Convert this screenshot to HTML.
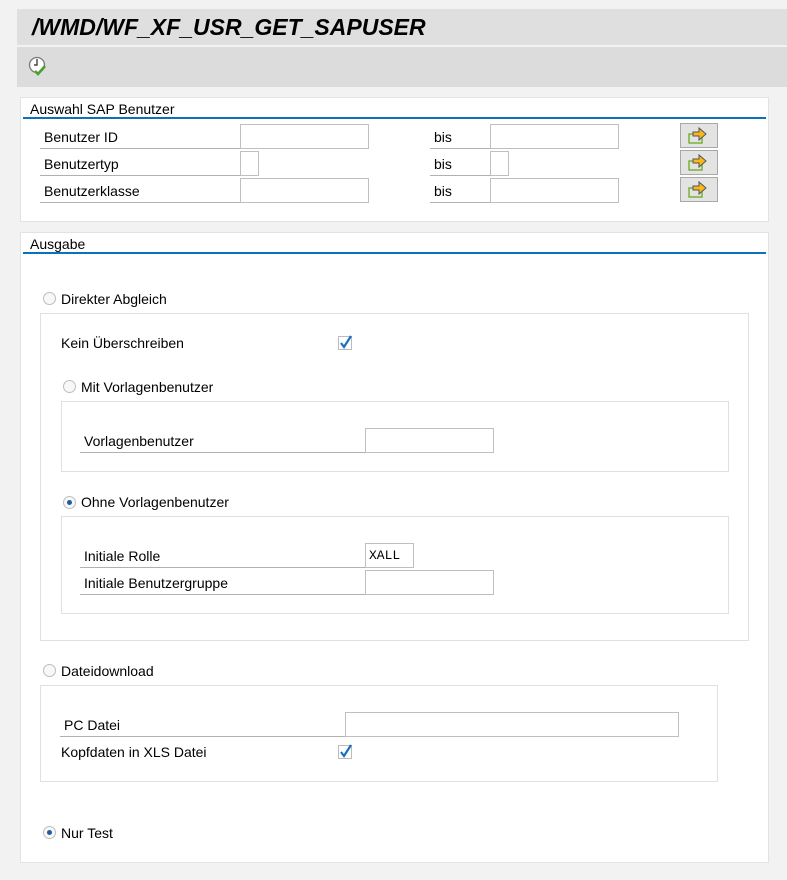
<!DOCTYPE html><html><head><style>
body{margin:0;width:787px;height:880px;background:#f2f2f2;font-family:"Liberation Sans",sans-serif;font-size:14px;color:#000;position:relative;overflow:hidden}
.a{position:absolute}
.t{position:absolute;white-space:nowrap;line-height:16px}
.in{position:absolute;background:#fff;border:1px solid #bfbfbf;box-sizing:border-box;height:25px}
.ul{position:absolute;height:1px;background:#b0b0b0}
.box{position:absolute;background:#fff;border:1px solid #e2e2e2;box-sizing:border-box}
.fr{position:absolute;border:1px solid #e0e0e0;box-sizing:border-box}
.blue{position:absolute;height:2px;background:#0a72b8}
.btn{position:absolute;width:38px;height:25px;background:#e3e3e3;border:1px solid #a8a8a8;box-sizing:border-box}
.rad{position:absolute;width:13px;height:13px;border:1px solid #bdbdbd;border-radius:50%;box-sizing:border-box;background:#f8f8f8}
.rad.on:after{content:"";position:absolute;left:3px;top:3px;width:5px;height:5px;border-radius:50%;background:#1a5fa0}
.cb{position:absolute;width:14px;height:14px;border:1px solid #bbb;box-sizing:border-box;background:#fff}
</style></head><body>
<div class="a" style="left:17px;top:9px;width:770px;height:36px;background:#dfdfdf"></div>
<div class="t" style="left:32px;top:14px;font-size:23px;line-height:26px;font-weight:bold;font-style:italic">/WMD/WF_XF_USR_GET_SAPUSER</div>
<div class="a" style="left:17px;top:47px;width:770px;height:40px;background:#dcdcdc"></div>
<svg class="a" style="left:27px;top:55px" width="24" height="24" viewBox="0 0 24 24"><circle cx="10" cy="10" r="7.5" fill="#fff" stroke="#777" stroke-width="1.3"/><path d="M10 4v6h-3" stroke="#444" stroke-width="1.4" fill="none"/><path d="M8 16l3 3 7-8" stroke="#4aa02c" stroke-width="2.6" fill="none"/></svg>

<div class="box" style="left:20px;top:97px;width:749px;height:125px"></div>
<div class="t" style="left:30px;top:101px">Auswahl SAP Benutzer</div>
<div class="blue" style="left:23px;top:117px;width:743px"></div>

<div class="t" style="left:44px;top:129px">Benutzer ID</div>
<div class="ul" style="left:40px;top:148px;width:200px"></div>
<div class="in" style="left:240px;top:124px;width:129px"></div>
<div class="t" style="left:434px;top:129px">bis</div>
<div class="ul" style="left:430px;top:148px;width:60px"></div>
<div class="in" style="left:490px;top:124px;width:129px"></div>

<div class="t" style="left:44px;top:156px">Benutzertyp</div>
<div class="ul" style="left:40px;top:175px;width:200px"></div>
<div class="in" style="left:240px;top:151px;width:19px"></div>
<div class="t" style="left:434px;top:156px">bis</div>
<div class="ul" style="left:430px;top:175px;width:60px"></div>
<div class="in" style="left:490px;top:151px;width:19px"></div>

<div class="t" style="left:44px;top:183px">Benutzerklasse</div>
<div class="ul" style="left:40px;top:202px;width:200px"></div>
<div class="in" style="left:240px;top:178px;width:129px"></div>
<div class="t" style="left:434px;top:183px">bis</div>
<div class="ul" style="left:430px;top:202px;width:60px"></div>
<div class="in" style="left:490px;top:178px;width:129px"></div>

<div class="btn" style="left:680px;top:123px"></div>
<div class="btn" style="left:680px;top:150px"></div>
<div class="btn" style="left:680px;top:177px"></div>
<svg class="a" style="left:688px;top:126px" width="22" height="75" viewBox="0 0 22 75"><g id="ic"><rect x="1" y="8" width="13" height="9" fill="none" stroke="#6aaa1e" stroke-width="1.3"/><path d="M5 6h6v-4l7 6-7 6v-4h-6z" fill="#f6b81a" stroke="#555" stroke-width="1"/></g><use href="#ic" y="27"/><use href="#ic" y="54"/></svg>

<div class="box" style="left:20px;top:232px;width:749px;height:631px"></div>
<div class="t" style="left:30px;top:236px">Ausgabe</div>
<div class="blue" style="left:23px;top:252px;width:743px"></div>

<div class="rad" style="left:43px;top:292px"></div>
<div class="t" style="left:61px;top:291px">Direkter Abgleich</div>
<div class="fr" style="left:40px;top:313px;width:709px;height:328px"></div>
<div class="t" style="left:61px;top:335px">Kein Überschreiben</div>
<div class="cb" style="left:338px;top:336px"></div>
<svg class="a" style="left:338px;top:333px" width="16" height="17"><path d="M3 10l3 4 7-11" stroke="#1a6fc0" stroke-width="2.2" fill="none"/></svg>

<div class="rad" style="left:63px;top:380px"></div>
<div class="t" style="left:81px;top:379px">Mit Vorlagenbenutzer</div>
<div class="fr" style="left:61px;top:401px;width:668px;height:71px"></div>
<div class="t" style="left:84px;top:433px">Vorlagenbenutzer</div>
<div class="ul" style="left:80px;top:452px;width:285px"></div>
<div class="in" style="left:365px;top:428px;width:129px"></div>

<div class="rad on" style="left:63px;top:496px"></div>
<div class="t" style="left:81px;top:494px">Ohne Vorlagenbenutzer</div>
<div class="fr" style="left:61px;top:516px;width:668px;height:98px"></div>
<div class="t" style="left:84px;top:548px">Initiale Rolle</div>
<div class="ul" style="left:80px;top:567px;width:285px"></div>
<div class="in" style="left:365px;top:543px;width:49px;font-family:'Liberation Mono',monospace;font-size:13px;line-height:23px;padding-left:3px">XALL</div>
<div class="t" style="left:84px;top:575px">Initiale Benutzergruppe</div>
<div class="ul" style="left:80px;top:594px;width:285px"></div>
<div class="in" style="left:365px;top:570px;width:129px"></div>

<div class="rad" style="left:43px;top:664px"></div>
<div class="t" style="left:61px;top:663px">Dateidownload</div>
<div class="fr" style="left:40px;top:685px;width:678px;height:97px"></div>
<div class="t" style="left:64px;top:717px">PC Datei</div>
<div class="ul" style="left:60px;top:736px;width:285px"></div>
<div class="in" style="left:345px;top:712px;width:334px"></div>
<div class="t" style="left:61px;top:744px">Kopfdaten in XLS Datei</div>
<div class="cb" style="left:338px;top:745px"></div>
<svg class="a" style="left:338px;top:742px" width="16" height="17"><path d="M3 10l3 4 7-11" stroke="#1a6fc0" stroke-width="2.2" fill="none"/></svg>

<div class="rad on" style="left:43px;top:826px"></div>
<div class="t" style="left:61px;top:825px">Nur Test</div>
</body></html>
